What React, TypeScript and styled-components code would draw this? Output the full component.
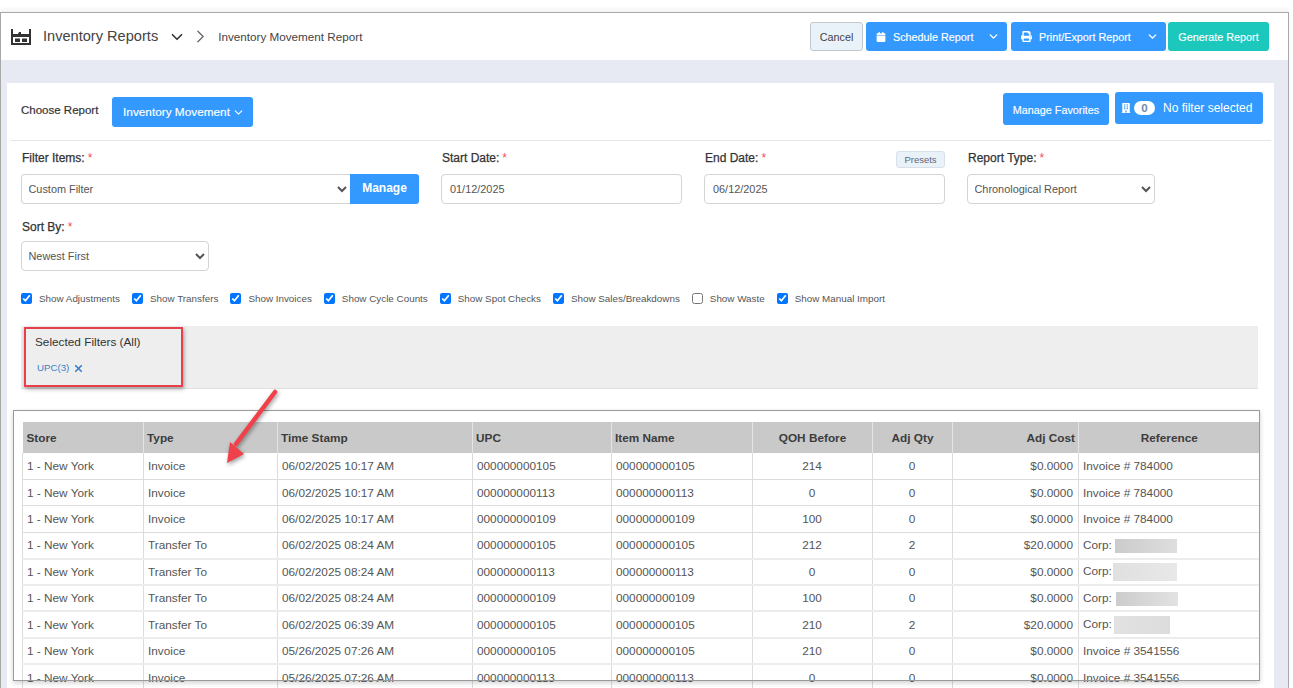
import styled, { createGlobalStyle } from "styled-components";
import { ChevronDown, ChevronRight, X } from "lucide-react";
import { FaBuilding, FaCalendar, FaPrint } from "react-icons/fa";

const GlobalStyle = createGlobalStyle`
  html, body {
    margin: 0;
    height: 688px;
    overflow: hidden;
    background: #fff;
    font-family: "Liberation Sans", Arial, sans-serif;
  }
`;

const Frame = styled.div`
  box-sizing: border-box;
  width: 1289px;
  height: 676px;
  margin-top: 12px;
  border-top: 1px solid #a8a8a8;
  border-left: 1px solid #a8a8a8;
  border-right: 1px solid #a8a8a8;
  background: #e8eaf3;
  box-shadow: 0 -3px 4px rgba(0, 0, 0, 0.05);
  overflow: hidden;
`;

const TopBar = styled.header`
  height: 47px;
  background: #fff;
  display: flex;
  align-items: center;
  padding: 0 19px 0 10px;
  color: #444;
`;

const PageTitle = styled.span`
  font-size: 14.6px;
  margin-left: 12px;
  padding-bottom: 2px;
  color: #444;
`;

const Crumb = styled.span`
  font-size: 11.7px;
  color: #444;
  margin-left: 7px;
  padding-bottom: 1px;
`;

const TopActions = styled.div`
  margin-left: auto;
  display: flex;
  align-items: center;
`;

const BarButton = styled.button<{ $tone?: "blue" | "teal" | "plain"; $width: number; $gap?: number; $split?: boolean }>`
  box-sizing: border-box;
  width: ${(p) => p.$width}px;
  height: 29px;
  margin-right: ${(p) => p.$gap ?? 0}px;
  padding: ${(p) => (p.$split ? "0 0 0 10px" : "0")};
  display: flex;
  align-items: center;
  justify-content: ${(p) => (p.$split ? "flex-start" : "center")};
  gap: 7px;
  font: 10.8px "Liberation Sans", Arial, sans-serif;
  -webkit-text-stroke: ${(p) => (p.$tone === "plain" ? "0" : "0.15px")};
  border-radius: ${(p) => (p.$split ? "3px 0 0 3px" : "3px")};
  border: ${(p) => (p.$tone === "plain" ? "1px solid #c4c8cc" : "0")};
  color: ${(p) => (p.$tone === "plain" ? "#444" : "#fff")};
  background: ${(p) =>
    p.$tone === "plain" ? "#eaf2f9" : p.$tone === "teal" ? "#1cc7bb" : "#3399ff"};
`;

const SplitToggle = styled.button<{ $width: number; $gap: number }>`
  box-sizing: border-box;
  width: ${(p) => p.$width}px;
  height: 29px;
  margin-right: ${(p) => p.$gap}px;
  padding: 0;
  border: 0;
  border-radius: 0 3px 3px 0;
  background: #3399ff;
  color: #fff;
  display: flex;
  align-items: center;
  justify-content: center;
`;

const Content = styled.main`
  padding: 23px 14px 0 6px;
`;

const Card = styled.section`
  background: #fff;
  height: 610px;
  overflow: hidden;
`;

const CardHead = styled.div`
  box-sizing: border-box;
  height: 58px;
  margin: 0 3px;
  padding: 0 11px;
  border-bottom: 1px solid #e6e6e6;
  display: flex;
  align-items: flex-start;
`;

const ChooseLabel = styled.span`
  font-size: 11.5px;
  color: #333;
  margin-top: 21px;
  width: 91px;
  -webkit-text-stroke: 0.2px #333;
`;

const BlueButton = styled.button<{ $width: number; $height: number; $top: number; $small?: boolean; $drop?: number; $inset?: number }>`
  box-sizing: border-box;
  width: ${(p) => p.$width}px;
  height: ${(p) => p.$height}px;
  margin-top: ${(p) => p.$top}px;
  border: 0;
  border-radius: 3px;
  padding: ${(p) => p.$drop ?? 0}px 0 0 ${(p) => p.$inset ?? 0}px;
  background: #3399ff;
  color: #fff;
  font: ${(p) => (p.$small ? "10.8px" : "11.8px")} "Liberation Sans", Arial, sans-serif;
  -webkit-text-stroke: 0.15px;
  display: flex;
  align-items: center;
  justify-content: center;
  gap: 2px;
`;

const FilterCountButton = styled.button`
  box-sizing: border-box;
  width: 148px;
  height: 32px;
  margin-top: 9px;
  padding: 0 0 1px 6px;
  border: 0;
  border-radius: 3px;
  background: #3399ff;
  color: #fff;
  font: 12px "Liberation Sans", Arial, sans-serif;
  display: flex;
  align-items: center;
`;

const HeadRight = styled.div`
  margin-left: auto;
  display: flex;
  gap: 6px;
  margin-right: -3px;
  align-items: flex-start;
`;

const CountPill = styled.span`
  width: 21px;
  height: 14px;
  margin: 0 8px 0 3px;
  border-radius: 8px;
  background: #fff;
  color: #6f8aa8;
  font-size: 11.5px;
  font-weight: 700;
  line-height: 14px;
  text-align: center;
`;

const FilterGrid = styled.div`
  width: 1250px;
  margin-left: 14px;
  display: flex;
  flex-wrap: wrap;
  column-gap: 22px;
  row-gap: 13px;
  padding-top: 9px;
`;

const Field = styled.div<{ $width: number }>`
  position: relative;
  width: ${(p) => p.$width}px;
`;

const FieldLabel = styled.label<{ $nudge?: number }>`
  box-sizing: border-box;
  display: block;
  height: 24px;
  padding-top: ${(p) => p.$nudge ?? 0}px;
  padding-left: 1px;
  font-size: 12px;
  line-height: 16px;
  font-weight: 400;
  color: #333;
  -webkit-text-stroke: 0.25px #333;
`;

const Required = styled.span`
  color: #f0505a;
  -webkit-text-stroke: 0;
  margin-left: 3px;
`;

const controlBase = `
  box-sizing: border-box;
  height: 30px;
  border: 1px solid #d4d4d4;
  border-radius: 4px;
  background: #fff;
  color: #555;
  font: 10.9px "Liberation Sans", Arial, sans-serif;
  outline: none;
`;

const SelectBox = styled.select<{ $joined?: boolean }>`
  ${controlBase}
  width: 100%;
  padding: 0 2.5px;
  ${(p) => (p.$joined ? "border-radius: 4px 0 0 4px; border-right: 0;" : "")}
`;

const DateInput = styled.input`
  ${controlBase}
  width: 100%;
  padding: 0 8px;
`;

const JoinedRow = styled.div`
  display: flex;
`;

const ManageButton = styled.button`
  flex: 0 0 69px;
  height: 30px;
  border: 0;
  padding: 0 0 3px;
  border-radius: 0 3px 3px 0;
  background: #3399ff;
  color: #fff;
  font: 700 12px "Liberation Sans", Arial, sans-serif;
`;

const PresetsButton = styled.button`
  position: absolute;
  right: 0;
  top: 1px;
  width: 49px;
  height: 17px;
  padding: 0;
  border: 1px solid #d8e0e8;
  border-radius: 3px;
  background: #eaf2f9;
  color: #667;
  font: 9.5px "Liberation Sans", Arial, sans-serif;
`;

const CheckRow = styled.div`
  margin: 20px 0 0 14px;
  height: 14px;
  display: flex;
  align-items: center;
  gap: 12px;
`;

const CheckItem = styled.label`
  display: flex;
  align-items: center;
  gap: 7px;
  font-size: 9.85px;
  color: #555;
`;

const CheckBox = styled.input`
  width: 11px;
  height: 11px;
  margin: 0;
`;

const SelectedPanel = styled.div`
  position: relative;
  box-sizing: border-box;
  width: 1237px;
  height: 63px;
  margin: 21px 0 0 14px;
  padding: 9px 14px;
  background: #eeeeee;
  border-bottom: 1px solid #e0e0e0;
`;

const PanelTitle = styled.div`
  font-size: 11.8px;
  line-height: 15px;
  color: #333;
`;

const FilterTag = styled.div`
  margin: 12px 0 0 2px;
  display: flex;
  align-items: center;
  gap: 4px;
  font-size: 9.7px;
  line-height: 12px;
  color: #3a7fc4;
`;

const RedHighlight = styled.div`
  position: absolute;
  left: 3px;
  top: 1px;
  box-sizing: border-box;
  width: 159px;
  height: 60px;
  border: 2px solid #e8404a;
  box-shadow: 1px 2px 4px rgba(0, 0, 0, 0.35);
`;

const TableArea = styled.div`
  position: relative;
  width: 1247px;
  margin: 21px 0 0 6px;
  padding: 12px 0 0 9px;
  box-sizing: border-box;
`;

const AreaOutline = styled.div`
  position: absolute;
  left: 0;
  top: 0;
  box-sizing: border-box;
  width: 1247px;
  height: 271px;
  border: 1px solid #9a9a9a;
  box-shadow: 0 2px 5px rgba(0, 0, 0, 0.18);
  pointer-events: none;
`;

const ArrowMark = styled.svg`
  position: absolute;
  left: 187px;
  top: -28px;
  filter: drop-shadow(1px 2px 2px rgba(0, 0, 0, 0.4));
  pointer-events: none;
`;

const ReportTable = styled.table`
  table-layout: fixed;
  width: 1237px;
  border-collapse: collapse;
  font-size: 11.8px;
  color: #555;
`;

const HeadCell = styled.th<{ $align?: string }>`
  height: 31px;
  padding: 0 3px;
  background: #c9c9c9;
  color: #3c3c3c;
  font-weight: 700;
  text-align: ${(p) => p.$align ?? "left"};
  border-left: 1px solid #e4e4e4;
  &:first-child {
    border-left: 0;
    padding-left: 4px;
  }
`;

const Row = styled.tr<{ $thick?: boolean }>`
  height: 26.4px;
  border-bottom: ${(p) => (p.$thick ? "2px solid #ececec" : "1px solid #dcdcdc")};
`;

const Cell = styled.td<{ $align?: string }>`
  padding: 0 5px 0 4px;
  text-align: ${(p) => p.$align ?? "left"};
  border-left: 1px solid #dcdcdc;
  white-space: nowrap;
  overflow: hidden;
`;

const Redaction = styled.span<{ $width: number; $height: number; $offset: number; $from: string; $to: string }>`
  display: inline-block;
  vertical-align: middle;
  width: ${(p) => p.$width}px;
  height: ${(p) => p.$height}px;
  margin-left: ${(p) => p.$offset}px;
  background: linear-gradient(90deg, ${(p) => p.$from}, ${(p) => p.$to});
`;

const COLS = [121, 134, 195, 139, 141, 120, 80, 126, 181];

const HEADERS: [string, string][] = [
  ["Store", "left"],
  ["Type", "left"],
  ["Time Stamp", "left"],
  ["UPC", "left"],
  ["Item Name", "left"],
  ["QOH Before", "center"],
  ["Adj Qty", "center"],
  ["Adj Cost", "right"],
  ["Reference", "center"],
];

type Patch = { w: number; h: number; x: number; from: string; to: string };

type Entry = {
  type: string;
  time: string;
  upc: string;
  qoh: number;
  qty: number;
  cost: string;
  ref?: string;
  patch?: Patch;
  thick?: boolean;
};

const ROWS: Entry[] = [
  { type: "Invoice", time: "06/02/2025 10:17 AM", upc: "000000000105", qoh: 214, qty: 0, cost: "$0.0000", ref: "Invoice # 784000" },
  { type: "Invoice", time: "06/02/2025 10:17 AM", upc: "000000000113", qoh: 0, qty: 0, cost: "$0.0000", ref: "Invoice # 784000" },
  { type: "Invoice", time: "06/02/2025 10:17 AM", upc: "000000000109", qoh: 100, qty: 0, cost: "$0.0000", ref: "Invoice # 784000" },
  { type: "Transfer To", time: "06/02/2025 08:24 AM", upc: "000000000105", qoh: 212, qty: 2, cost: "$20.0000", patch: { w: 62, h: 14, x: 3, from: "#cbcbcb", to: "#dedede" }, thick: true },
  { type: "Transfer To", time: "06/02/2025 08:24 AM", upc: "000000000113", qoh: 0, qty: 0, cost: "$0.0000", patch: { w: 64, h: 18, x: 1, from: "#e0e0e0", to: "#e8e8e8" }, thick: true },
  { type: "Transfer To", time: "06/02/2025 08:24 AM", upc: "000000000109", qoh: 100, qty: 0, cost: "$0.0000", patch: { w: 62, h: 14, x: 4, from: "#cccccc", to: "#e2e2e2" }, thick: true },
  { type: "Transfer To", time: "06/02/2025 06:39 AM", upc: "000000000105", qoh: 210, qty: 2, cost: "$20.0000", patch: { w: 56, h: 18, x: 2, from: "#e2e2e2", to: "#dcdcdc" }, thick: true },
  { type: "Invoice", time: "05/26/2025 07:26 AM", upc: "000000000105", qoh: 210, qty: 0, cost: "$0.0000", ref: "Invoice # 3541556", thick: true },
  { type: "Invoice", time: "05/26/2025 07:26 AM", upc: "000000000113", qoh: 0, qty: 0, cost: "$0.0000", ref: "Invoice # 3541556" },
];

const CHECKS: [string, boolean][] = [
  ["Show Adjustments", true],
  ["Show Transfers", true],
  ["Show Invoices", true],
  ["Show Cycle Counts", true],
  ["Show Spot Checks", true],
  ["Show Sales/Breakdowns", true],
  ["Show Waste", false],
  ["Show Manual Import", true],
];

function WarehouseIcon() {
  return (
    <svg width="20" height="16" viewBox="0 0 20 16">
      <path d="M0 0h2v14h16V0h2v16H0z" fill="#333" />
      <path d="M2 5h5l1-2h2v2h8v3H2z" fill="#333" />
      <rect x="4" y="9.5" width="5" height="3.5" fill="#333" />
      <rect x="11" y="9.5" width="5" height="3.5" fill="#333" />
    </svg>
  );
}

export default function App() {
  return (
    <>
      <GlobalStyle />
      <Frame>
        <TopBar>
          <WarehouseIcon />
          <PageTitle>Inventory Reports</PageTitle>
          <ChevronDown size={18} color="#333" strokeWidth={2.2} style={{ marginLeft: 10 }} />
          <ChevronRight size={21} color="#666" strokeWidth={1.5} style={{ marginLeft: 4 }} />
          <Crumb>Inventory Movement Report</Crumb>
          <TopActions>
            <BarButton $tone="plain" $width={53} $gap={3}>Cancel</BarButton>
            <BarButton $width={113} $split>
              <FaCalendar size={10} />
              Schedule Report
            </BarButton>
            <SplitToggle $width={28} $gap={4}>
              <ChevronDown size={13} strokeWidth={2.6} />
            </SplitToggle>
            <BarButton $width={127} $split>
              <FaPrint size={11} />
              Print/Export Report
            </BarButton>
            <SplitToggle $width={28} $gap={2}>
              <ChevronDown size={13} strokeWidth={2.6} />
            </SplitToggle>
            <BarButton $tone="teal" $width={101}>Generate Report</BarButton>
          </TopActions>
        </TopBar>
        <Content>
          <Card>
            <CardHead>
              <ChooseLabel>Choose Report</ChooseLabel>
              <BlueButton $width={141} $height={30} $top={14} $inset={3}>
                Inventory Movement
                <ChevronDown size={13} />
              </BlueButton>
              <HeadRight>
                <BlueButton $width={106} $height={32} $top={10} $small $drop={2}>Manage Favorites</BlueButton>
                <FilterCountButton>
                  <FaBuilding size={10} />
                  <CountPill>0</CountPill>
                  No filter selected
                </FilterCountButton>
              </HeadRight>
            </CardHead>
            <FilterGrid>
              <Field $width={398}>
                <FieldLabel>Filter Items:<Required>*</Required></FieldLabel>
                <JoinedRow>
                  <SelectBox $joined defaultValue="Custom Filter">
                    <option>Custom Filter</option>
                  </SelectBox>
                  <ManageButton>Manage</ManageButton>
                </JoinedRow>
              </Field>
              <Field $width={241}>
                <FieldLabel>Start Date:<Required>*</Required></FieldLabel>
                <DateInput defaultValue="01/12/2025" />
              </Field>
              <Field $width={241}>
                <FieldLabel>End Date:<Required>*</Required></FieldLabel>
                <PresetsButton>Presets</PresetsButton>
                <DateInput defaultValue="06/12/2025" />
              </Field>
              <Field $width={188}>
                <FieldLabel>Report Type:<Required>*</Required></FieldLabel>
                <SelectBox defaultValue="Chronological Report">
                  <option>Chronological Report</option>
                </SelectBox>
              </Field>
              <Field $width={188}>
                <FieldLabel $nudge={2}>Sort By:<Required>*</Required></FieldLabel>
                <SelectBox defaultValue="Newest First">
                  <option>Newest First</option>
                </SelectBox>
              </Field>
            </FilterGrid>
            <CheckRow>
              {CHECKS.map(([label, on]) => (
                <CheckItem key={label}>
                  <CheckBox type="checkbox" defaultChecked={on} />
                  {label}
                </CheckItem>
              ))}
            </CheckRow>
            <SelectedPanel>
              <PanelTitle>Selected Filters (All)</PanelTitle>
              <FilterTag>
                UPC(3)
                <X size={11} strokeWidth={3.6} />
              </FilterTag>
              <RedHighlight />
            </SelectedPanel>
            <TableArea>
              <ReportTable>
                <colgroup>
                  {COLS.map((w, i) => (
                    <col key={i} width={w} />
                  ))}
                </colgroup>
                <thead>
                  <tr>
                    {HEADERS.map(([name, align]) => (
                      <HeadCell key={name} $align={align}>{name}</HeadCell>
                    ))}
                  </tr>
                </thead>
                <tbody>
                  {ROWS.map((r, i) => (
                    <Row key={i} $thick={r.thick}>
                      <Cell>1 - New York</Cell>
                      <Cell>{r.type}</Cell>
                      <Cell>{r.time}</Cell>
                      <Cell>{r.upc}</Cell>
                      <Cell>{r.upc}</Cell>
                      <Cell $align="center">{r.qoh}</Cell>
                      <Cell $align="center">{r.qty}</Cell>
                      <Cell $align="right">{r.cost}</Cell>
                      <Cell>
                        {r.ref ?? "Corp:"}
                        {r.patch && (
                          <Redaction
                            $width={r.patch.w}
                            $height={r.patch.h}
                            $offset={r.patch.x}
                            $from={r.patch.from}
                            $to={r.patch.to}
                          />
                        )}
                      </Cell>
                    </Row>
                  ))}
                </tbody>
              </ReportTable>
              <AreaOutline />
              <ArrowMark width="90" height="90" viewBox="0 0 90 90">
                <path d="M75 10 L36 62" stroke="#f0404a" strokeWidth="4.5" strokeLinecap="round" />
                <path d="M27 81 L30 60 L44 72 Z" fill="#f0404a" />
              </ArrowMark>
            </TableArea>
          </Card>
        </Content>
      </Frame>
    </>
  );
}
